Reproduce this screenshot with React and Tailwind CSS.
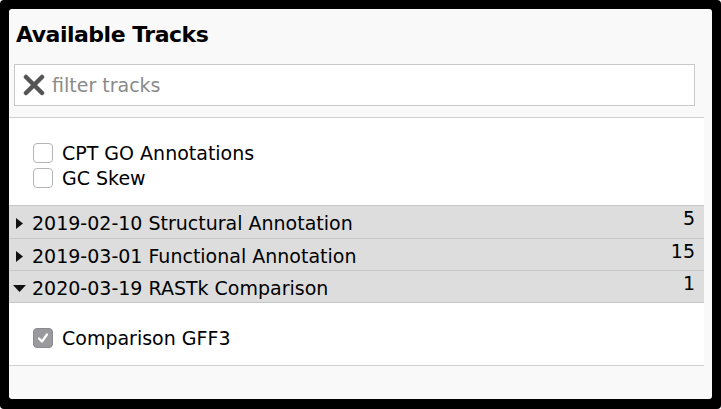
import React from "react";

function Box({ checked }) {
  if (checked) {
    return (
      <span className="w-[20px] h-[20px] rounded-[4px] bg-[#9a9a9e] border border-[#8a8a8e] flex items-center justify-center shrink-0">
        <svg width="14" height="14" viewBox="0 0 14 14">
          <path d="M3 7.5 L6 10.5 L11 3.5" stroke="white" strokeWidth="2.2" fill="none" strokeLinecap="round" strokeLinejoin="round" />
        </svg>
      </span>
    );
  }
  return <span className="w-[20px] h-[20px] rounded-[4px] bg-white border border-[#b5b5b5] shrink-0" />;
}

function Group({ label, count, open, tall }) {
  return (
    <div className={(tall ? "h-[33px] " : "h-[32px] ") + "border-t border-[#c6c6c6] bg-[#dddddd] flex items-start pl-[5px] pr-[9px] overflow-hidden"}>
      <span className="w-[10px] h-[31px] pt-[3px] flex items-center justify-center shrink-0">
        {open ? (
          <svg width="13" height="7" viewBox="0 0 13 7" className="shrink-0"><path d="M0 0 L13 0 L6.5 7 Z" fill="#111" /></svg>
        ) : (
          <svg width="7" height="11" viewBox="0 0 7 11" className="shrink-0"><path d="M0 0 L7 5.5 L0 11 Z" fill="#111" /></svg>
        )}
      </span>
      <span className="text-[19px] leading-[28px] pt-[3px] text-black flex-1 pl-[8px]">{label}</span>
      <span className="text-[19px] leading-[24px] text-black">{count}</span>
    </div>
  );
}

export default function App() {
  return (
    <div className="w-[721px] h-[409px] bg-white" style={{ fontFamily: '"DejaVu Sans", sans-serif' }}>
      <div className="w-[721px] h-[409px] bg-black rounded-[4px] pt-[9px] pl-[9px] pr-[9px] pb-[10px]">
        <div className="w-full h-full bg-[#f9f9f9] rounded-[3px] flex flex-col">
          <div className="h-[55px] pl-[7px] pt-[11px]">
            <h1 className="text-[22px] font-bold leading-[30px] tracking-[-0.5px] text-black">Available Tracks</h1>
          </div>
          <div className="ml-[5px] w-[681px] h-[42px] bg-white border border-[#c9c9c9] flex items-center pl-[8px] gap-[7px]">
            <svg width="22" height="22" viewBox="0 0 22 22">
              <path d="M3 3 L19 19 M19 3 L3 19" stroke="#555" strokeWidth="4.5" strokeLinecap="round" />
            </svg>
            <span className="text-[19px] text-[#8a8a8a]">filter tracks</span>
          </div>
          <div className="mt-[11px] w-[695px] bg-white border-t border-b border-[#cfcfcf]">
            <div className="pt-[25px] pb-[17px] pl-[24px] flex flex-col gap-[5px]">
              <div className="flex items-center gap-[9px] h-[20px]">
                <Box />
                <span className="text-[19px] text-black leading-[20px]">CPT GO Annotations</span>
              </div>
              <div className="flex items-center gap-[9px] h-[20px]">
                <Box />
                <span className="text-[19px] text-black leading-[20px]">GC Skew</span>
              </div>
            </div>
            <Group label="2019-02-10 Structural Annotation" count="5" tall />
            <Group label="2019-03-01 Functional Annotation" count="15" />
            <Group label="2020-03-19 RASTk Comparison" count="1" open />
            <div className="border-t border-[#c6c6c6] h-[63px] pl-[24px] pt-[25px]">
              <div className="flex items-center gap-[9px] h-[20px]">
                <Box checked />
                <span className="text-[19px] text-black leading-[20px]">Comparison GFF3</span>
              </div>
            </div>
          </div>
        </div>
      </div>
    </div>
  );
}
